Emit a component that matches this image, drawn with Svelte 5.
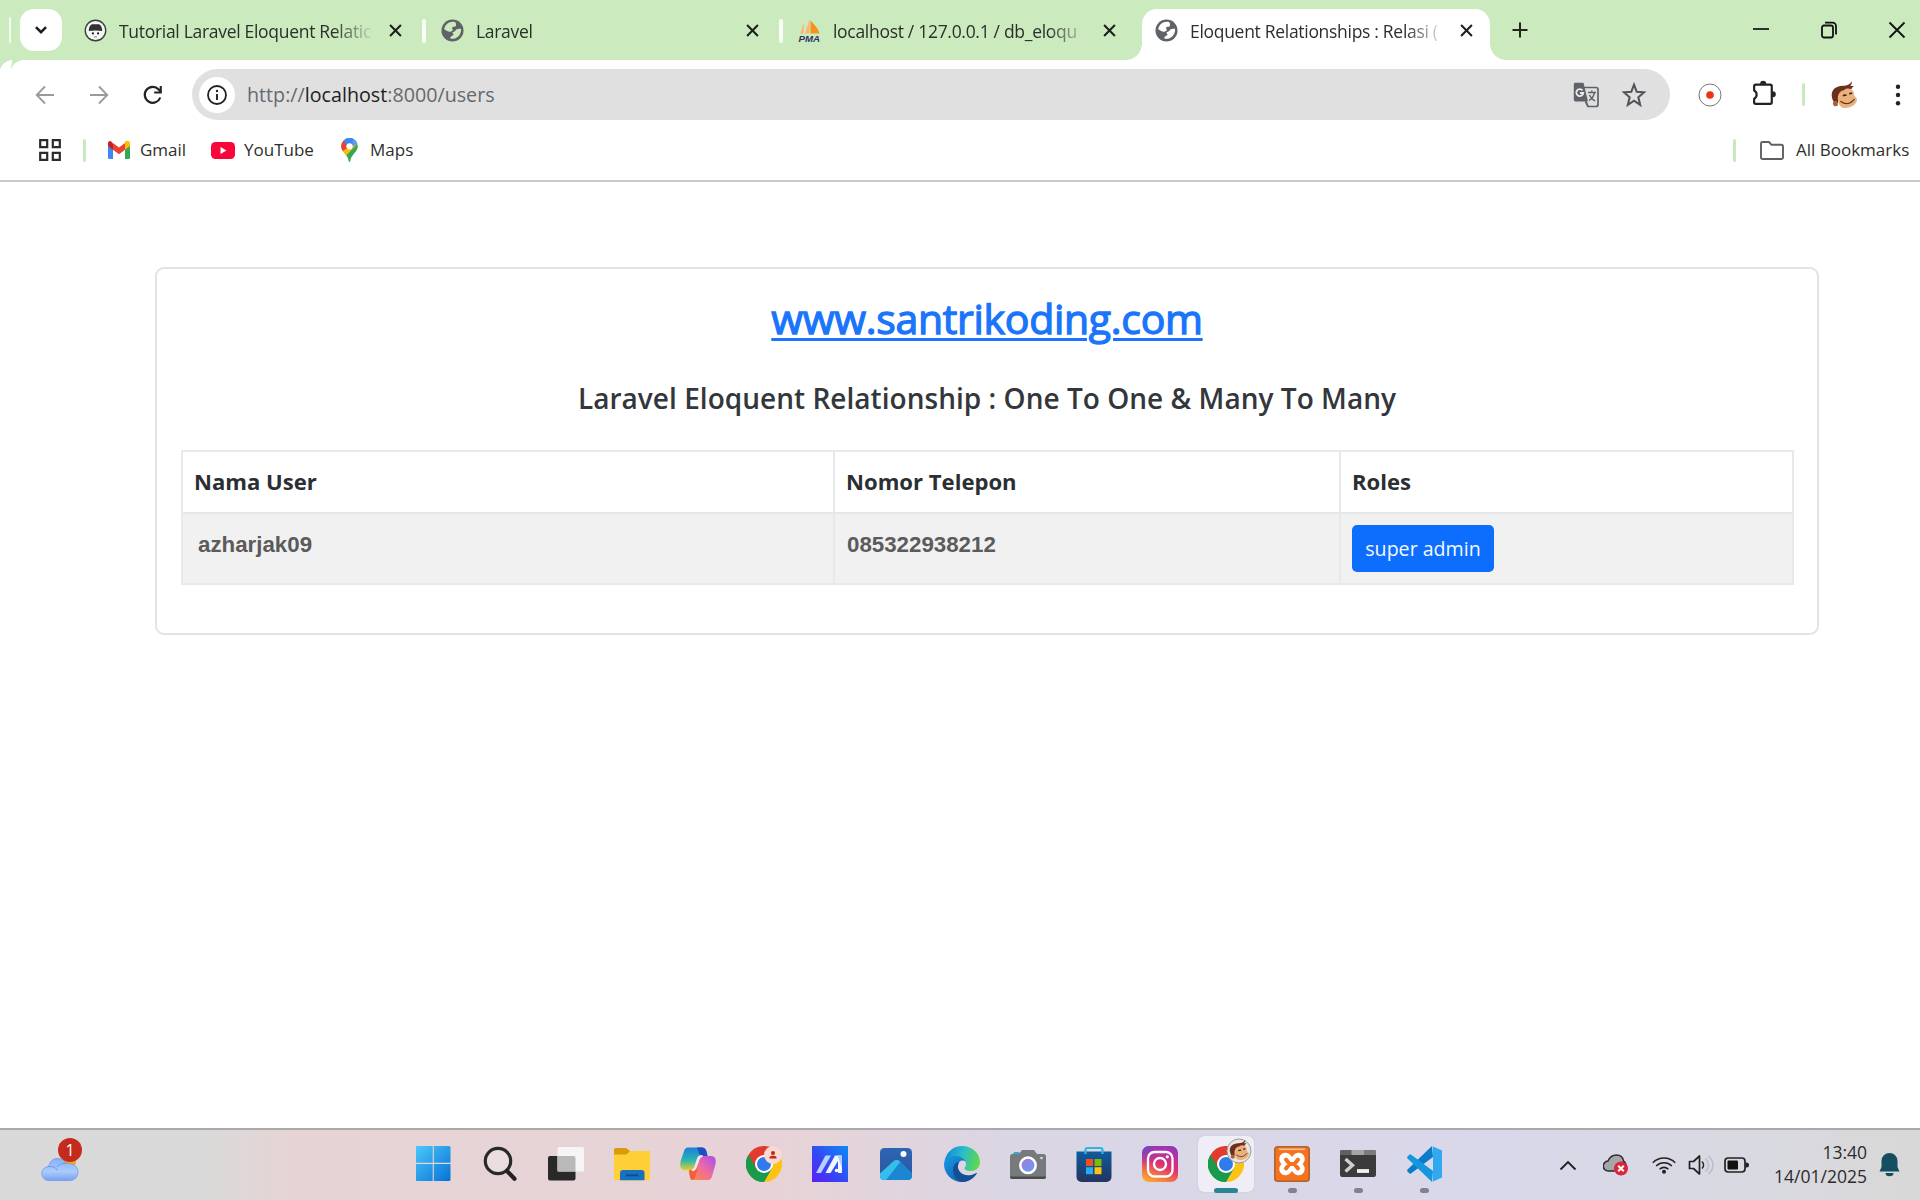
<script>
  const tabs = [
    { icon: 'santri', title: 'Tutorial Laravel Eloquent Relatic', active: false },
    { icon: 'globe', title: 'Laravel', active: false },
    { icon: 'pma', title: 'localhost / 127.0.0.1 / db_eloqu', active: false },
    { icon: 'globe', title: 'Eloquent Relationships : Relasi (', active: true }
  ];
  const users = [{ name: 'azharjak09', phone: '085322938212', role: 'super admin' }];
  const apps = [
    { id: 'start' }, { id: 'search' }, { id: 'taskview' }, { id: 'explorer' },
    { id: 'copilot' }, { id: 'chrome' }, { id: 'myasus' }, { id: 'photos' },
    { id: 'edge' }, { id: 'camera' }, { id: 'store' }, { id: 'instagram' },
    { id: 'chromeMonkey', state: 'current' }, { id: 'xampp', state: 'open' },
    { id: 'terminal', state: 'open' }, { id: 'vscode', state: 'open' }
  ];
</script>

{#snippet monkey()}
  <path d="M2 16C0 9 5 4.500 12 4.500c4 0 6-1 8.500-4-.2 2-.8 3.200-1.800 4.300 1.500-.4 2.500-.3 3.500.2-1.500.5-2 1.200-2 2C18 9 8 10 7.500 20 6 22.500 3 20 2 16z" fill="#6b2f1c" />
  <path d="M3 22c-1-2 1-4 3-3.500 1 1 2 3.500 1 4.500-1.500.8-3.300.4-4-1z" fill="#a5613c" />
  <path d="M7.500 18c-1-5 1.500-9 5.500-9.500C16 6 20 7 21.500 9.500c1 1.500.5 3.500 1.500 5 2.500 1 2.500 4 1 6-2 3-6 4.700-10 4.500-4 0-6-3-6.500-7z" fill="#e9b27c" />
  <path d="M12.500 13.500c.8-.6 1.500-.7 2.300-.3M18.500 11.700l1.500-.3" stroke="#3c1b11" stroke-width="1.500" stroke-linecap="round" fill="none" />
  <path d="M10 19c4.500 3.500 9 2 12.500-2" fill="none" stroke="#6b2f1c" stroke-width="1.100" stroke-linecap="round" />
{/snippet}

{#snippet chromeMark()}
  <path d="M18 18 2.400 9A18 18 0 0 0 18 36L25.800 22.500Z" fill="#1a9a4b" />
  <path d="M18 9H33.600A18 18 0 0 1 18 36L25.800 22.500Z" fill="#fcc315" />
  <path d="M2.400 9A18 18 0 0 1 33.600 9H18l-7.800 13.500z" fill="#e23b2e" />
  <path d="M2.400 9 10.200 22.500 18 27l7.800-4.500L18 36A18 18 0 0 1 2.400 9Z" fill="#1a9a4b" />
  <circle cx="18" cy="18" r="9" fill="#fff" />
  <circle cx="18" cy="18" r="7" fill="#2f7bea" />
{/snippet}

{#snippet favicon(id)}
  {#if id === 'santri'}
    <svg class="fav" viewBox="0 0 24 24">
      <circle cx="12" cy="12" r="10.700" fill="#f4f8f3" stroke="#3a3f3b" stroke-width="1.400" />
      <path d="M5 12.500C5 8 7 5.500 9 5.500h6c2 0 4 2.500 4 7-4.500-.8-9.500-.8-14 0z" fill="#333" />
      <circle cx="9.300" cy="15" r="1.200" fill="#222" /><circle cx="14.700" cy="15" r="1.200" fill="#222" />
      <path d="M10.500 18.700h3" stroke="#777" />
    </svg>
  {:else if id === 'globe'}
    <svg class="fav" viewBox="0 0 24 24">
      <circle cx="12" cy="12" r="11.500" fill="#5f6368" />
      <path d="M14.500 3.200C9.500 2 4.500 5 3.300 10.500c1.700 1.500 3.200 2.500 5.200 2.700 1.500.1 2-.5 3-.8 1.200-.4.8-1.700.3-2.300-.8-.9.2-2 1.200-2 1.500 0 3-.6 2.700-2.200-.2-1 0-2-1.200-2.700z" class="land" />
      <path d="M13.500 13.300c1.700-.4 1.800-1.800 3-2.500 1.300-.8 2.500-.8 4.400-.5.5 4.700-2.300 9.200-7.400 10.400-1.500.1-3-.1-4-.6.4-1.700 1.500-2.600 2.700-3 1.100-.5 1.300-1.400.2-2-.9-.6-.3-1.500 1.100-1.800z" class="land" />
    </svg>
  {:else}
    <svg class="fav pma" viewBox="0 0 24 26">
      <path d="M13 15.500V2c4 4 8 8 9.500 13.500z" fill="#f7931a" />
      <path d="M2.500 15.500 6 4v11.500zM7.500 15.500 12 .5v15z" fill="#fbb46a" />
      <text x=".5" y="24.600" font-family="Liberation Sans, sans-serif" font-weight="700" font-style="italic" font-size="10" textLength="22.500" lengthAdjust="spacingAndGlyphs" fill="#34355f">PMA</text>
    </svg>
  {/if}
{/snippet}

{#snippet app(id)}
  <svg class="app" viewBox="0 0 36 36">
    {#if id === 'start'}
      <defs><linearGradient id="win" x1="0" y1="0" x2="1" y2="1"><stop offset="0" stop-color="#4cc9fa" /><stop offset="1" stop-color="#0672d6" /></linearGradient></defs>
      <path d="M1 0h15.700v16.700H-.5V1.500A1.500 1.500 0 0 1 1 0zM17.800 0H33a1.500 1.500 0 0 1 1.500 1.500v15.200H17.800zM-.5 18h17.200v17H1a1.500 1.500 0 0 1-1.500-1.500zM17.800 18h16.700v15.500A1.500 1.500 0 0 1 33 35H17.800z" fill="url(#win)" />
    {:else if id === 'search'}
      <circle cx="16" cy="15" r="12.700" fill="#efe5e7" fill-opacity=".55" stroke="#292929" stroke-width="3.200" />
      <path d="m25.500 25.500 7 7.200" stroke="#222" stroke-width="4.200" stroke-linecap="round" />
    {:else if id === 'taskview'}
      <rect x="0" y="10" width="27.500" height="24.500" rx="2" fill="#292929" />
      <rect x="9.500" y="1" width="26.500" height="24.500" rx="1.500" fill="#f5f5f5" />
      <path d="M9.500 10h16a2 2 0 0 1 2 2v13.500h-18z" fill="#b9b9b9" />
    {:else if id === 'explorer'}
      <path d="M0 3.500A1.800 1.800 0 0 1 1.800 2H12l4 3v6H0z" fill="#d99a0b" />
      <path d="M0 8.500h12.500L16 5h20v27.500a1.800 1.800 0 0 1-1.800 1.800H1.800A1.800 1.800 0 0 1 0 32.500z" fill="#ffcf38" />
      <path d="M6 34.300V27a3 3 0 0 1 3-3h18.500a3 3 0 0 1 3 3v7.300z" fill="#1672bf" />
      <path d="M12 29.300h12.500" stroke="#0b4f91" stroke-width="2" />
    {:else if id === 'copilot'}
      <defs>
        <linearGradient id="cpa" x1="0" y1="0" x2="0" y2="1"><stop offset="0" stop-color="#1c7fdc" /><stop offset=".55" stop-color="#2ab6b1" /><stop offset="1" stop-color="#e9cd2b" /></linearGradient>
        <linearGradient id="cpb" x1="1" y1="0" x2="0" y2="1"><stop offset="0" stop-color="#a64ff2" /><stop offset=".5" stop-color="#f16b9d" /><stop offset="1" stop-color="#ff8f35" /></linearGradient>
      </defs>
      <path d="M8 1.500h14c4 0 4.500 4 5.500 8.500h-6c-2 0-3 1-3.800 3.500L15 22c-.7 2-2 2.300-4 2.300H5C0 24.300-.5 19 1 14L4 5c.8-2.300 2-3.500 4-3.500z" fill="url(#cpa)" />
      <path d="M17 1.500h5c4 0 4.500 4 5.500 8.500H20z" fill="#1d4fc4" />
      <path d="M28 34H14c-4 0-3.500-4-5-9.700h3c2 0 3-1 3.800-3.300l3-8c.7-2 1.500-3 3.700-3H31c5 0 5.500 5 4 10l-3 10.500c-.8 2.500-2 3.500-4 3.500z" fill="url(#cpb)" />
      <path d="M9 24.300h4c2.500 0 4.500-1.500 5.500-4l-3 10c-1 3-2 3.700-3.500 3.700-2 0-2.300-4-3-9.700z" fill="#f1603b" />
      <path d="M17.700 13.500C18.500 11 19.500 10 21.500 10h1c-2 0-3 1-3.700 3l-3 8c-.8 2.500-2 3.300-3.800 3.300 2 0 2.500-1 3-2.500z" fill="#f7e6ed" stroke="#f7e6ed" stroke-width="2" />
    {:else if id === 'chrome'}
      {@render chromeMark()}
      <circle cx="27" cy="9" r="9" fill="#f8d9d3" />
      <circle cx="27" cy="7" r="2" fill="#c22719" /><path d="M23.500 12.500V11.500c0-2.500 7-2.500 7 0v1z" fill="#c22719" />
    {:else if id === 'myasus'}
      <defs><linearGradient id="asus" x1="1" y1="0" x2="0" y2="1"><stop offset="0" stop-color="#0b8cf4" /><stop offset=".55" stop-color="#3448f5" /><stop offset="1" stop-color="#5a20f4" /></linearGradient></defs>
      <rect width="36" height="36" fill="url(#asus)" />
      <path d="M4 27 13.500 9.500H19L9 27z" fill="#b9d0ff" />
      <path d="M13.500 27 23 9.500h7V27h-4V15l-7.500 12z" fill="#f2f6ff" /><path d="M25.500 9.500H30V22z" fill="#b5ccff" /><circle cx="24.500" cy="24.500" r="1.800" fill="#fff" />
    {:else if id === 'photos'}
      <defs><linearGradient id="pho" x1="0" y1="0" x2="0" y2="1"><stop offset="0" stop-color="#2a66b5" /><stop offset="1" stop-color="#35539b" /></linearGradient></defs>
      <rect x="2" y="2" width="32" height="32" rx="4.500" fill="url(#pho)" />
      <path d="M2 27.500 16 14.800c1.500-1.400 4-1.300 6 .4L34 27v3a4 4 0 0 1-4 4H6a4 4 0 0 1-4-4z" fill="#1c86d0" />
      <path d="M2 27.500 16 14.800c1.500-1.400 4-1.300 6.500 1L8 34H6a4 4 0 0 1-4-4z" fill="#35bdec" />
      <circle cx="25.500" cy="8" r="3" fill="#fff" />
    {:else if id === 'edge'}
      <defs>
        <linearGradient id="ed1" x1="0" y1=".3" x2="1" y2=".5"><stop offset="0" stop-color="#1587d8" /><stop offset=".5" stop-color="#28bfc8" /><stop offset="1" stop-color="#61d84b" /></linearGradient>
        <linearGradient id="ed2" x1="0" y1="0" x2="1" y2="1"><stop offset="0" stop-color="#1999e6" /><stop offset="1" stop-color="#0a529f" /></linearGradient>
      </defs>
      <path d="M.5 15C3 4 11 0 18 0c11 0 18 8 18 16 0 6-4.500 9-9 9-4 0-6.500-1.200-6.500-2.700 0-1 1.500-1.800 1.500-4.300 0-4-4-7-9-7-6 0-10 2-12.500 4z" fill="url(#ed1)" />
      <path d="M0 18C0 12 6 9.500 12 10c6 .5 9.500 4 9.800 6-2-3-8-1.500-8 4 0 7 7 11 14 9 2.500-.7 4-1.500 5-1.700C29 33 24 36 18 36 8 36 0 28 0 18z" fill="url(#ed2)" />
      <path d="M13.800 20c0 7 7 11 14 9 2.500-.7 4-1.500 5.500-2.500C30 32.500 24 36 18 36c-7-2-9-8-9-12 0-5 3-8 6-8z" fill="#124f94" />
    {:else if id === 'camera'}
      <rect x="3" y="6" width="7" height="6" rx="2" fill="#38a5dd" />
      <path d="M0 10.500A2.500 2.500 0 0 1 2.500 8H9l3-4h12l3 4h6.500a2.500 2.500 0 0 1 2.500 2.500V31a2 2 0 0 1-2 2H2a2 2 0 0 1-2-2z" fill="#777a7d" />
      <path d="M0 30.500h36a2.500 2.500 0 0 1-2.500 2.500h-31A2.500 2.500 0 0 1 0 30.500z" fill="#4a4c4e" />
      <defs><linearGradient id="lens" x1="0" y1="0" x2="1" y2="1"><stop offset="0" stop-color="#af73da" /><stop offset="1" stop-color="#58a5f4" /></linearGradient></defs>
      <circle cx="18" cy="19.300" r="7.700" fill="url(#lens)" stroke="#fff" stroke-width="2.500" /><circle cx="31.500" cy="12" r="1.300" fill="#ddd" />
    {:else if id === 'store'}
      <defs><linearGradient id="sto" x1="0" y1="0" x2="0" y2="1"><stop offset="0" stop-color="#0e5c9d" /><stop offset="1" stop-color="#24345f" /></linearGradient></defs>
      <path d="M.5 5.500h35V31a5 5 0 0 1-5 5h-25a5 5 0 0 1-5-5z" fill="url(#sto)" />
      <path d="M9.500 8V4A2 2 0 0 1 11.500 2h13a2 2 0 0 1 2 2V8" fill="none" stroke="#2fb5e4" stroke-width="2.200" />
      <path d="M10 13h7v7h-7z" fill="#f25022" /><path d="M18.500 13h7v7h-7z" fill="#7fba00" /><path d="M10 21.200h7v7h-7z" fill="#27aef2" /><path d="M18.500 21.200h7v7h-7z" fill="#ffc20e" />
    {:else if id === 'instagram'}
      <defs>
        <linearGradient id="ig" x1=".7" y1="0" x2=".3" y2="1"><stop offset="0" stop-color="#9a34bd" /><stop offset=".5" stop-color="#df2f70" /><stop offset="1" stop-color="#fda32f" /></linearGradient>
        <radialGradient id="ig2" cx="0" cy="0" r=".6"><stop offset="0" stop-color="#5650d6" /><stop offset="1" stop-color="#9a34bd" stop-opacity="0" /></radialGradient>
      </defs>
      <rect width="36" height="36" rx="7" fill="url(#ig)" /><rect width="36" height="36" rx="7" fill="url(#ig2)" />
      <rect x="6" y="6" width="24.500" height="24.500" rx="6.500" fill="none" stroke="#fff" stroke-width="2.300" />
      <circle cx="18" cy="18" r="6" fill="none" stroke="#fff" stroke-width="2.400" /><circle cx="25.300" cy="10.800" r="1.600" fill="#fff" />
    {:else if id === 'chromeMonkey'}
      {@render chromeMark()}
    {:else if id === 'xampp'}
      <rect x=".8" y=".8" width="34.400" height="34.400" rx="3" fill="#f37321" stroke="#b0642f" stroke-width="1.600" />
      <path d="M5 3.300h26" stroke="#fbc08e" stroke-width="1.600" />
      <g fill="none" stroke-linecap="round" stroke-linejoin="round">
        <path d="m11.500 13 4 5-4 5M24.500 13l-4 5 4 5M15.500 18h5" stroke="#fff" stroke-width="12.500" />
        <path d="m12 13.500 3.500 4.500-3.500 4.500M24 13.500 20.500 18l3.500 4.500M15.500 18h5" stroke="#f37321" stroke-width="4" />
      </g>
    {:else if id === 'terminal'}
      <rect y="4" width="36" height="27" rx="2.200" fill="#3b3b3b" />
      <path d="M2 4h10v5H0V6a2 2 0 0 1 2-2z" fill="#606060" /><path d="M11.500 4H24v5H11.500z" fill="#a5a5a5" /><path d="M24 4h10a2 2 0 0 1 2 2v3H24z" fill="#7b7b7b" />
      <path d="m5.500 13 7 6.300-7 6.300" fill="none" stroke="#cfcfcf" stroke-width="3.400" /><path d="M17 25h12" stroke="#f1f1f1" stroke-width="3.800" />
    {:else if id === 'vscode'}
      <path d="m26 0-24.500 23.500a1.500 1.500 0 0 0 0 2l1.800 1.700a1.500 1.500 0 0 0 2 .1L27 11z" fill="#0b7cc9" />
      <path d="M26 36 1.500 12.500a1.500 1.500 0 0 1 0-2l1.800-1.700a1.500 1.500 0 0 1 2-.1L27 25z" fill="#1597dd" />
      <path d="M26 0 36 4.500v27L26 36c.8 0 1-.5 1-1.500v-33C27 .5 26.800 0 26 0z" fill="#30a9ee" />
    {/if}
  </svg>
{/snippet}

<div class="screen">
  <header class="strip">
    <span class="sliver"></span>
    <button class="tabsearch" aria-label="Search tabs"><svg viewBox="0 0 16 16"><path d="m3.500 5.500 4.500 4.500 4.500-4.500" fill="none" stroke="#1c201c" stroke-width="2.300" /></svg></button>
    <nav class="tabs">
      {#each tabs as tab}
        <div class={['tab', tab.active && 'active']}>
          {@render favicon(tab.icon)}
          <span class="title">{tab.title}</span>
          <svg class="x" viewBox="0 0 12 12"><path d="m1 1 10 10M11 1 1 11" stroke="#1c1f1c" stroke-width="1.900" /></svg>
        </div>
      {/each}
    </nav>
    <svg class="plus" viewBox="0 0 16 16"><path d="M8 .5v15M.5 8h15" stroke="#1f241f" stroke-width="2" /></svg>
    <div class="winctl">
      <svg viewBox="0 0 18 18"><path d="M1 8h16" stroke="#111" stroke-width="1.700" /></svg>
      <svg viewBox="0 0 18 18"><rect x="2" y="4.500" width="11" height="12" rx="2" fill="none" stroke="#111" stroke-width="1.800" /><path d="M5 1.700h7.500a3.500 3.500 0 0 1 3.500 3.500v8.300" fill="none" stroke="#111" stroke-width="1.800" /></svg>
      <svg viewBox="0 0 18 18"><path d="m1.500 1.500 15 15M16.500 1.500l-15 15" stroke="#111" stroke-width="1.800" /></svg>
    </div>
    <svg class="corner" viewBox="0 0 24 10"><path d="M0 0h12C5 1 1 5 0 10zM11 10c1.500-5 5-9 12-10H12c.5 3-1.500 7-1 10z" fill="#cbeabe" /></svg>
  </header>

  <div class="toolbar">
    <div class="nav">
      <svg viewBox="0 0 20 20"><path d="M19 10H2M10 1.500 1.700 10l8.300 8.500" fill="none" stroke="#9a9a9a" stroke-width="1.800" /></svg>
      <svg viewBox="0 0 20 20"><path d="M1 10h17M10 1.500l8.300 8.500-8.300 8.500" fill="none" stroke="#9a9a9a" stroke-width="1.800" /></svg>
      <svg viewBox="0 0 20 20"><path d="M17.300 12.500A8 8 0 1 1 15.700 4.400L18 7" fill="none" stroke="#222" stroke-width="2.200" /><path d="M18.800 1v7.600h-7.600V6.500h5.500V1z" fill="#222" /></svg>
    </div>
    <div class="omnibox">
      <span class="info"><svg viewBox="0 0 20 20"><circle cx="10" cy="10" r="9" fill="none" stroke="#222" stroke-width="1.800" /><path d="M10 9v6" stroke="#222" stroke-width="1.900" /><circle cx="10" cy="6" r="1.200" fill="#222" /></svg></span>
      <span class="url">http://<b>localhost</b>:8000/users</span>
      <svg class="translate" viewBox="0 0 26 26">
        <path d="M2 .8h8.500L15 19.500H2.500A1.700 1.700 0 0 1 .8 17.800V2.500A1.700 1.700 0 0 1 2 .8z" fill="#5f6368" />
        <path d="M11 5.500h12a2 2 0 0 1 2 2V22.500a2 2 0 0 1-2 2H15L12.500 19.500" fill="none" stroke="#5f6368" stroke-width="1.700" />
        <path d="M9.500 8.300A3.500 3.500 0 1 0 10.300 11H7" fill="none" stroke="#ececec" stroke-width="1.800" />
        <path d="M15 10.500h8M18.800 8.500v2M21.500 10.500c-.8 4-3 6.500-5.500 8M16.500 13c1 2.500 3.500 5 5.500 6M13 19.500l2 5" fill="none" stroke="#5f6368" stroke-width="1.400" />
      </svg>
      <svg class="star" viewBox="0 0 24 24"><path d="m12 2.500 2.500 6.600 6.700.4-5.200 4.600 1.700 7L12 17.300l-5.700 3.800 1.700-7-5.200-4.600 6.700-.4z" fill="none" stroke="#50545a" stroke-width="1.900" /></svg>
    </div>
    <svg class="rec" viewBox="0 0 24 24"><circle cx="12" cy="12" r="11" fill="#fff" stroke="#777" stroke-width="1" /><circle cx="12" cy="12" r="3.800" fill="#ee3312" /></svg>
    <svg class="puzzle" viewBox="0 0 26 26"><path d="M4.500 5.500h14A1.500 1.500 0 0 1 20 7v15.500a1.500 1.500 0 0 1-1.500 1.500h-14A1.500 1.500 0 0 1 3 22.500V19a4.500 4.500 0 0 0 0-8V7a1.500 1.500 0 0 1 1.500-1.500z" fill="none" stroke="#222" stroke-width="2.100" stroke-linejoin="round" /><path d="M9.300 4.500a2.400 2.400 0 0 1 4.800 0zM21 12.300a2.400 2.400 0 0 1 0 4.800z" fill="#222" stroke="#222" /></svg>
    <span class="bar"></span>
    <svg class="monkey" viewBox="0 0 26 26">{@render monkey()}</svg>
    <svg class="dots" viewBox="0 0 6 22"><circle cx="3" cy="2.800" r="2.200" /><circle cx="3" cy="11" r="2.200" /><circle cx="3" cy="19.200" r="2.200" /></svg>
  </div>

  <div class="bookmarks">
    <svg class="grid" viewBox="0 0 22 22"><path d="M1.200 1.200h7v7h-7zM13.800 1.200h7v7h-7zM1.200 13.800h7v7h-7zM13.800 13.800h7v7h-7z" fill="none" stroke="#2b2b2f" stroke-width="2.200" /></svg>
    <span class="bar"></span>
    <div class="bm gmail">
      <svg width="22" height="18" viewBox="0 0 22 18"><path d="M0 3v13.500A1.500 1.500 0 0 0 1.500 18H5V7z" fill="#4285f4" /><path d="M22 3v13.500a1.500 1.500 0 0 1-1.500 1.500H17V7z" fill="#34a853" /><path d="M17 2.500V8.700L22 5V2.500C22-.2 19-.8 17 .8z" fill="#fbbc04" /><path d="M0 2.500V5l5 3.700V2.500L3.500.8C1.700-.8 0 .3 0 2.500z" fill="#c5221f" /><path d="M5 8.700V2l6 4.500L17 2v6.700L11 13.200z" fill="#ea4335" /></svg>
      <span>Gmail</span>
    </div>
    <div class="bm youtube">
      <svg width="24" height="17" viewBox="0 0 24 17"><rect width="24" height="17" rx="4.500" fill="#f8063a" /><path d="m9.500 5 6 3.500-6 3.500z" fill="#fff" /></svg>
      <span>YouTube</span>
    </div>
    <div class="bm maps">
      <svg width="17" height="24" viewBox="0 0 17 24">
        <defs><clipPath id="pin"><path d="M8.500 0A8.300 8.300 0 0 0 .2 8.300C.2 14 7 16.500 7.700 23.200c.1 1 1.500 1 1.600 0C10 16.500 16.800 14 16.800 8.300A8.300 8.300 0 0 0 8.500 0z" /></clipPath></defs>
        <g clip-path="url(#pin)"><path d="M0 0h17v24H0z" fill="#34a853" /><path d="M0 14 17-4v9L3 20z" fill="#fbbc04" /><path d="M0 0h17v3L8 10z" fill="#4285f4" /><path d="M-1 0 2.500 3 8 9 0 14z" fill="#ea4335" /><path d="M12 1l6 4-7 4z" fill="#5a9bf7" /></g>
        <circle cx="8.500" cy="8.300" r="3.100" fill="#fff" />
      </svg>
      <span>Maps</span>
    </div>
    <span class="bar right"></span>
    <div class="bm all">
      <svg width="24" height="19" viewBox="0 0 24 19"><path d="M1 2.500A1.500 1.500 0 0 1 2.500 1H9l2.500 2.800h10A1.500 1.500 0 0 1 23 5.300v11.200a1.500 1.500 0 0 1-1.500 1.500h-19A1.500 1.500 0 0 1 1 16.500z" fill="none" stroke="#5c5f63" stroke-width="1.900" /></svg>
      <span>All Bookmarks</span>
    </div>
  </div>

  <main class="page">
    <section class="card">
      <h1><a href="#site">www.santrikoding.com</a></h1>
      <h2>Laravel Eloquent Relationship : One To One &amp; Many To Many</h2>
      <div class="table">
        <div class="row head"><span>Nama User</span><span>Nomor Telepon</span><span>Roles</span></div>
        {#each users as user}
          <div class="row body">
            <span class="name">{user.name}</span><span>{user.phone}</span>
            <span><button class="role">{user.role}</button></span>
          </div>
        {/each}
      </div>
    </section>
  </main>

  <footer class="taskbar">
    <div class="weather">
      <svg viewBox="0 0 38 25"><defs><linearGradient id="cl" x1="0" y1="0" x2="0" y2="1"><stop offset="0" stop-color="#86b1f6" /><stop offset=".6" stop-color="#abcbfb" /><stop offset="1" stop-color="#799ff0" /></linearGradient></defs><circle cx="29" cy="5" r="6" fill="#f5a623" /><path d="M8 23.500a7 7 0 0 1-.5-14C9 4 12 1.500 16.500 1.500c4 0 7 2 8.300 5.200C31 5.500 37 9 37 15c0 5-3.500 8.500-8.500 8.500z" fill="url(#cl)" stroke="#7199e6" stroke-width=".8" /><path d="M7.500 9.500c5-.5 8 1.500 9 4M16 10c2-3 5-4 8.800-3.300" fill="none" stroke="#6c98e8" stroke-width="1" /></svg>
      <span class="badge">1</span>
    </div>
    <div class="apps">
      {#each apps as item}
        <div class={['cell', item.state]}>
          {@render app(item.id)}
          {#if item.id === 'chromeMonkey'}
            <svg class="avatar" viewBox="0 0 26 26"><circle cx="13" cy="13" r="12" fill="#e9e6e4" stroke="#999" /><g transform="translate(2.500 1.500) scale(.82)">{@render monkey()}</g></svg>
          {/if}
        </div>
      {/each}
    </div>
    <div class="tray">
      <svg class="up" width="18" height="11" viewBox="0 0 18 11"><path d="m1.500 9.500 7.500-7.500 7.500 7.500" fill="none" stroke="#222" stroke-width="1.900" /></svg>
      <svg class="cloud" width="26" height="22" viewBox="0 0 26 22"><path d="M5.500 17a5 5 0 0 1-.5-10C7 2.500 10.500 1 13.500 1c4 0 6.500 2.500 7 6a5 5 0 0 1 2 6L11 17z" fill="#a6a6aa" stroke="#2b2b2b" stroke-width="1.500" /><circle cx="18" cy="14.500" r="7" fill="#d9263b" /><path d="m15.200 11.700 5.600 5.600M20.800 11.700l-5.600 5.600" stroke="#fff" stroke-width="2" /></svg>
      <svg class="wifi" width="24" height="18" viewBox="0 0 24 18"><g fill="none" stroke="#222" stroke-width="1.600"><path d="M.8 6.800a15.500 15.500 0 0 1 22.400 0M4.200 10a11 11 0 0 1 15.600 0M7.600 13.200a6.300 6.300 0 0 1 8.800 0" /></g><circle cx="12" cy="15.800" r="2" fill="#222" /></svg>
      <svg class="vol" width="26" height="22" viewBox="0 0 26 22"><path d="M1.500 7.500h4L11.500 2v18l-6-5.500h-4z" fill="none" stroke="#222" stroke-width="1.700" stroke-linejoin="round" /><path d="M14 7.500c2 2 2 5 0 7" fill="none" stroke="#222" stroke-width="1.600" /><path d="M17.500 4.500c4 4 4 9 0 13M20.500 2c6 5.500 6 12.500 0 18" fill="none" stroke="#bdbcc8" stroke-width="1.600" /></svg>
      <svg class="bat" width="25" height="16" viewBox="0 0 25 16"><rect x="1" y="1" width="20" height="14" rx="3.200" fill="none" stroke="#222" stroke-width="1.700" /><rect x="3.500" y="3.500" width="10.500" height="9" rx="1" fill="#111" /><path d="M21.500 5.500h1a2.500 2.500 0 0 1 0 5h-1z" fill="#222" /></svg>
      <div class="clock"><span>13:40</span><span>14/01/2025</span></div>
      <svg class="bell" width="21" height="24" viewBox="0 0 21 24"><path d="M10.500 0a8 8 0 0 1 8 8v6l2 4.500H.5l2-4.500V8a8 8 0 0 1 8-8z" fill="#164e61" /><path d="M6.500 20h8a4 3.300 0 0 1-8 0z" fill="#164e61" /></svg>
    </div>
  </footer>
</div>

<style>
  :global(body) { margin: 0; overflow: hidden; }
  .screen { width: 1920px; height: 1200px; display: flex; flex-direction: column; background: #fff; font-family: "Open Sans", "Noto Sans", sans-serif; color: #2c2f2c; overflow: hidden; }
  svg { flex: none; display: block; }
  button { border: 0; padding: 0; font: inherit; }
  b { font-weight: 400; color: #1d1f22; }

  .strip { height: 60px; flex: none; display: flex; align-items: center; background: #cbeabe; position: relative; }
  .corner { position: absolute; left: 0; top: 60px; width: 24px; height: 10px; }
  .sliver { width: 2px; height: 26px; margin-left: 9px; background: #f4fbf0; border-radius: 2px; }
  .tabsearch { width: 42px; height: 42px; margin-left: 9px; background: #fff; border-radius: 14px; display: grid; place-items: center; }
  .tabsearch svg { width: 18px; height: 18px; }
  .tabs { display: flex; margin-left: 9px; align-self: stretch; }
  .tab { width: 357px; height: 51px; margin-top: 9px; box-sizing: border-box; padding: 0 0 0 13px; display: flex; align-items: center; position: relative; }
  .fav { width: 23px; height: 23px; margin-top: -8px; }
  .pma { height: 26px; margin-top: -7px; }
  .land { fill: #cbeabe; }
  .active .land { fill: #fff; }
  .title { width: 253px; margin-left: 12px; margin-top: -7px; font-size: 17.500px; letter-spacing: -.3px; white-space: nowrap; mask-image: linear-gradient(90deg, #000 215px, transparent 256px); }
  .x { width: 13px; height: 13px; margin: -8px 0 0 17px; }
  .tab:not(.active)::after { content: ""; position: absolute; left: 351px; top: 10px; width: 4px; height: 24px; border-radius: 2px; background: #f8fdf5; }
  .tab:nth-child(3)::after { display: none; }
  .tab.active { width: 348px; background: #fff; border-radius: 15px 15px 0 0; }
  .tab.active::before, .tab.active::after { content: ""; position: absolute; bottom: 0; width: 16px; height: 16px; }
  .tab.active::before { left: -16px; background: radial-gradient(circle at 0 0, transparent 15.500px, #fff 16px); }
  .tab.active::after { right: -16px; background: radial-gradient(circle at 100% 0, transparent 15.500px, #fff 16px); }
  .plus { width: 16px; height: 16px; margin-left: 22px; }
  .winctl { display: flex; gap: 50px; margin-left: auto; margin-right: 14px; }
  .winctl svg { width: 18px; height: 18px; }

  .toolbar { height: 69px; flex: none; display: flex; align-items: center; }
  .nav { display: flex; gap: 34px; margin-left: 35px; width: 157px; }
  .nav svg { width: 20px; height: 20px; }
  .omnibox { width: 1478px; height: 51px; border-radius: 26px; background: #e0e0e0; display: flex; align-items: center; }
  .info { width: 36px; height: 36px; margin-left: 7px; border-radius: 50%; background: #fff; display: grid; place-items: center; }
  .info svg { width: 20px; height: 20px; }
  .url { margin-left: 12px; font-size: 19.700px; color: #66696c; white-space: nowrap; }
  .translate { width: 26px; height: 26px; margin-left: auto; }
  .star { width: 26px; height: 26px; margin: 0 23px 0 22px; }
  .rec { width: 24px; height: 24px; margin-left: 28px; }
  .puzzle { width: 27px; height: 27px; margin: -4px 0 0 29px; }
  .bar { flex: none; width: 3px; height: 23px; background: #c8e9bd; border-radius: 2px; }
  .toolbar .bar { margin-left: 24px; }
  .monkey { width: 28px; height: 28px; margin-left: 25px; }
  .dots { width: 6px; height: 22px; margin-left: 37px; fill: #222; }

  .bookmarks { height: 53px; padding-bottom: 2px; box-sizing: border-box; flex: none; display: flex; align-items: flex-start; border-bottom: 2px solid #c9c9c9; }
  .bookmarks > * { margin-top: 9px; }
  .grid { width: 22px; height: 22px; margin-left: 39px; margin-top: 10px; }
  .bookmarks .bar { margin-left: 22px; margin-top: 10px; }
  .bookmarks .bar.right { margin-left: auto; margin-right: 24px; }
  .bm { display: flex; align-items: center; height: 24px; font-size: 17px; white-space: nowrap; }
  .bm span { margin-top: -2px; }
  .gmail { margin-left: 22px; gap: 10px; width: 103px; }
  .youtube { gap: 9px; width: 130px; }
  .maps { gap: 12px; }
  .all { gap: 12px; width: 160px; }

  .page { flex: 1; padding: 85px 101px 0 155px; background: #fff; }
  .card { box-sizing: border-box; width: 1664px; height: 368px; border: 2px solid #e2e3e5; border-radius: 9px; padding: 22px 24px 0; }
  h1 { margin: 0; font-size: 41px; line-height: 54px; font-weight: 500; text-align: center; letter-spacing: -.3px; }
  h1 a { color: #1a75fb; -webkit-text-stroke: 1.300px #1a75fb; text-decoration: underline; text-decoration-thickness: 3px; text-underline-offset: 4px; }
  h2 { margin: 36px 0 0; font-size: 28px; line-height: 34px; font-weight: 600; text-align: center; color: #33373b; letter-spacing: .03px; }
  .table { margin-top: 35px; border: 2px solid #e8e9eb; margin-right: -1px; }
  .row { display: grid; grid-template-columns: 650px 506px 1fr; }
  .row > span { padding-left: 11px; display: flex; align-items: center; }
  .row > span + span { border-left: 2px solid #e6e8ea; padding-left: 11px; }
  .head { height: 60px; font-size: 22.100px; font-weight: 700; color: #2b2f33; border-bottom: 2px solid #e6e7e8; }
  .head > span { padding-bottom: 2px; }
  .body { height: 69px; background: #f1f1f2; font: 700 22.300px "Liberation Sans", Arial, sans-serif; color: #5b5b5b; }
  .body > span:not(:last-child) { padding: 0 0 8px 12px; }
  .row.body .name { padding-left: 15px; }
  .role { width: 142px; height: 47px; border-radius: 5px; background: #0d6efd; color: #f3f8ff; font: 400 19.600px "Open Sans", sans-serif; }

  .taskbar { height: 72px; flex: none; box-sizing: border-box; border-top: 2px solid #aaa8ab; display: flex; background: linear-gradient(90deg, #d9d9d9 200px, #e6d4d5 290px, #e7d3d7 780px, #dad6e4 1020px, #d9d8ea 1500px, #d9d9e0 1780px, #d8d8d8 1900px); }
  .weather { position: relative; width: 38px; margin-left: 41px; }
  .weather svg { width: 38px; height: 25px; margin-top: 27px; }
  .badge { position: absolute; left: 17px; top: 8px; width: 24px; height: 24px; border-radius: 50%; background: #c42b1c; color: #fff; font-size: 16px; line-height: 24px; text-align: center; }
  .apps { display: flex; margin-left: 322px; }
  .cell { width: 66px; height: 70px; position: relative; display: flex; justify-content: center; padding-top: 16px; box-sizing: border-box; }
  .app { width: 36px; height: 36px; }
  .cell.current { width: 56px; height: 56px; margin: 6px 5px 0; padding-top: 10px; border-radius: 6px; background: #efedf6; box-shadow: 0 0 1px #aaa; }
  .avatar { position: absolute; right: 2px; top: 2px; width: 26px; height: 26px; }
  .cell.open::after, .cell.current::after { content: ""; position: absolute; bottom: 7px; left: 29px; width: 9px; height: 5px; border-radius: 3px; background: #828190; }
  .cell.current::after { left: 16px; bottom: -1px; width: 24px; background: #2b8593; }
  .tray { display: flex; align-items: center; margin-left: auto; height: 70px; }
  .cloud { margin-left: 26px; }
  .wifi { margin-left: 23px; }
  .vol { margin-left: 12px; }
  .bat { margin-left: 10px; }
  .clock { width: 118px; margin-top: -3px; display: flex; flex-direction: column; text-align: right; font-size: 17.500px; line-height: 24px; color: #2b2b2b; }
  .bell { margin-left: 12px; margin-right: 20px; }
</style>
